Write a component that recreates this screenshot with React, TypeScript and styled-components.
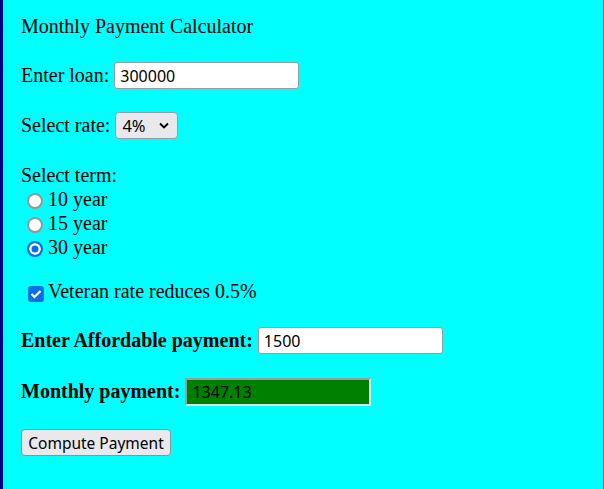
import React, { useState } from "react";
import styled, { createGlobalStyle } from "styled-components";

const GlobalStyle = createGlobalStyle`
  html, body { margin: 0; padding: 0; }
  body { background: #00ffff; }
`;

const Page = styled.div`
  min-height: 100vh;
  box-sizing: border-box;
  background: #00ffff;
  border-left: 3px solid #00008b;
  border-right: 1px solid #0070b8;
  padding: 15px 18px 0;
  font-family: "Liberation Serif", "Times New Roman", serif;
  font-size: 20px;
  color: #000;
`;

const Title = styled.div`
  line-height: 23px;
`;

const Row = styled.div<{ $mt?: number }>`
  display: flex;
  align-items: center;
  height: 27px;
  margin-top: ${(p) => p.$mt ?? 24}px;
  gap: 5px;
  white-space: nowrap;
`;

const Label = styled.span<{ $bold?: boolean }>`
  line-height: 23px;
  font-weight: ${(p) => (p.$bold ? 700 : 400)};
`;

const TextInput = styled.input`
  flex-shrink: 0;
  box-sizing: border-box;
  width: 185px;
  height: 27px;
  margin: 0;
  padding: 0 5px;
  border: 1px solid #9a9aa4;
  border-radius: 3px;
  background: #fff;
  font-family: "Noto Sans", "Open Sans", sans-serif;
  font-size: 16px;
  color: #000;
  outline: none;
`;

const OutputField = styled.input`
  flex-shrink: 0;
  box-sizing: border-box;
  width: 186px;
  height: 28px;
  margin: 0;
  padding: 0 5px;
  border: 2px solid;
  border-color: #9c9c9c #e2e2e2 #e2e2e2 #9c9c9c;
  background: #008000;
  font-family: "Noto Sans", "Open Sans", sans-serif;
  font-size: 16px;
  color: #000;
  outline: none;
`;

const SelectBox = styled.div`
  flex-shrink: 0;
  box-sizing: border-box;
  width: 63px;
  height: 27px;
  border: 1px solid #9a9aa4;
  border-radius: 4px;
  background: #e9e9ed;
  display: flex;
  align-items: center;
  justify-content: space-between;
  padding: 0 8px 0 6px;
  font-family: "Noto Sans", "Open Sans", sans-serif;
  font-size: 16.5px;
`;

const Chevron = styled.svg`
  width: 10px;
  height: 7px;
`;

const TermBlock = styled.div`
  margin-top: 24px;
`;

const TermLine = styled.label`
  display: flex;
  align-items: center;
  height: 24px;
  line-height: 24px;
`;

const Radio = styled.span<{ $checked?: boolean }>`
  flex-shrink: 0;
  box-sizing: border-box;
  width: 16px;
  height: 16px;
  margin: 4px 5px 0 6px;
  border-radius: 50%;
  border: 2px solid ${(p) => (p.$checked ? "#0a6ee6" : "#979797")};
  background: ${(p) => (p.$checked ? "#0a6ee6" : "#fff")};
  box-shadow: ${(p) => (p.$checked ? "inset 0 0 0 2.5px #fff" : "none")};
`;

const CheckRow = styled.label`
  display: flex;
  align-items: center;
  height: 23px;
  line-height: 23px;
  margin-top: 21px;
`;

const Check = styled.span`
  flex-shrink: 0;
  box-sizing: border-box;
  width: 16px;
  height: 16px;
  margin: 4px 4px 0 7px;
  border-radius: 3px;
  background: #0a6ee6;
  display: flex;
  align-items: center;
  justify-content: center;
`;

const Button = styled.button`
  flex-shrink: 0;
  box-sizing: border-box;
  width: 150px;
  height: 27px;
  margin: 0;
  padding: 0;
  border: 1px solid #8f8f9d;
  border-radius: 4px;
  background: #e9e9ed;
  font-family: "Noto Sans", "Open Sans", sans-serif;
  font-size: 15.5px;
  color: #000;
`;

export default function App() {
  const [loan, setLoan] = useState("300000");
  const [afford, setAfford] = useState("1500");
  return (
    <>
      <GlobalStyle />
      <Page>
        <Title>Monthly Payment Calculator</Title>
        <Row>
          <Label>Enter loan:</Label>
          <TextInput value={loan} onChange={(e) => setLoan(e.target.value)} />
        </Row>
        <Row $mt={23}>
          <Label>Select rate:</Label>
          <SelectBox>
            <span>4%</span>
            <Chevron viewBox="0 0 10 7">
              <polyline points="1,1.5 5,5.5 9,1.5" fill="none" stroke="#000" strokeWidth="1.8" />
            </Chevron>
          </SelectBox>
        </Row>
        <TermBlock>
          <TermLine>Select term:</TermLine>
          <TermLine>
            <Radio />
            10 year
          </TermLine>
          <TermLine>
            <Radio />
            15 year
          </TermLine>
          <TermLine>
            <Radio $checked />
            30 year
          </TermLine>
        </TermBlock>
        <CheckRow>
          <Check>
            <svg width="12" height="10" viewBox="0 0 12 10">
              <polyline points="1.5,5 4.5,8 10.5,2" fill="none" stroke="#fff" strokeWidth="2.2" />
            </svg>
          </Check>
          Veteran rate reduces 0.5%
        </CheckRow>
        <Row>
          <Label $bold>Enter Affordable payment:</Label>
          <TextInput value={afford} onChange={(e) => setAfford(e.target.value)} />
        </Row>
        <Row>
          <Label $bold>Monthly payment:</Label>
          <OutputField readOnly value="1347.13" />
        </Row>
        <Row>
          <Button>Compute Payment</Button>
        </Row>
      </Page>
    </>
  );
}
